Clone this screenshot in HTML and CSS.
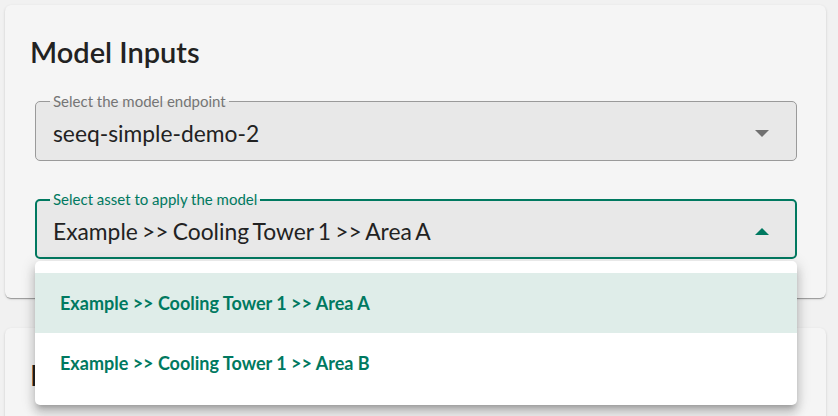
FILE: index.html
```html
<!DOCTYPE html>
<html lang="en">
<head>
<meta charset="utf-8">
<title>Model Inputs</title>
<link rel="stylesheet" href="styles.css">
</head>
<body>
  <section class="card card-inputs">
    <h2 class="card-title">Model Inputs</h2>
    <div class="field">
      <span class="field-label">Select the model endpoint</span>
      <span class="field-value">seeq-simple-demo-2</span>
      <span class="arrow arrow-down"></span>
    </div>
    <div class="select-wrap">
      <div class="field field-focused">
        <span class="field-label">Select asset to apply the model</span>
        <span class="field-value">Example &gt;&gt; Cooling Tower 1 &gt;&gt; Area A</span>
        <span class="arrow arrow-up"></span>
      </div>
      <ul class="menu">
        <li class="menu-item selected">Example &gt;&gt; Cooling Tower 1 &gt;&gt; Area A</li>
        <li class="menu-item">Example &gt;&gt; Cooling Tower 1 &gt;&gt; Area B</li>
      </ul>
    </div>
  </section>
  <section class="card card-outputs">
    <h2 class="card-title">Model Outputs</h2>
  </section>
</body>
</html>
```

FILE: styles.css
```css
* { box-sizing: border-box; }
html, body { height: 100%; }
body {
  margin: 0;
  padding: 5px 12px 0 5px;
  background: #f1f1f1;
  font-family: Lato, "Noto Sans", sans-serif;
  color: #222;
  overflow: hidden;
}
.card {
  background: #f5f5f5;
  border-radius: 6px;
  box-shadow: 0 2px 1px -1px rgba(0,0,0,0.2), 0 1px 1px 0 rgba(0,0,0,0.14), 0 1px 3px 0 rgba(0,0,0,0.12);
  padding: 30px 29px 39px 30px;
}
.card-outputs {
  margin-top: 30px;
  height: 200px;
}
.card-title {
  margin: 0 0 32px -5px;
  font-size: 29px;
  line-height: 34px;
  font-weight: 600;
  color: #222;
}
.field {
  position: relative;
  height: 60px;
  border: 1px solid #9a9a9a;
  border-radius: 5px;
  background: #e8e8e8;
  display: flex;
  align-items: center;
  padding: 4px 17px 0 17px;
}
.field-label {
  position: absolute;
  top: -10px;
  left: 14px;
  padding: 0 3px;
  font-size: 15px;
  line-height: 18px;
  color: #757575;
  background: linear-gradient(to bottom, #f5f5f5 50%, #e8e8e8 50%);
}
.field-value {
  flex: 1;
  font-size: 22.8px;
  line-height: 28px;
  word-spacing: -1.6px;
  color: #222;
  white-space: nowrap;
}
.arrow {
  width: 0;
  height: 0;
  border-left: 7px solid transparent;
  border-right: 7px solid transparent;
  margin-right: 10px;
}
.arrow-down { border-top: 7px solid #707070; }
.arrow-up { border-bottom: 7px solid #007960; }
.select-wrap {
  position: relative;
  margin-top: 38px;
}
.field-focused {
  border: 2px solid #007960;
  padding-left: 16px;
  padding-right: 16px;
}
.field-focused .field-label {
  top: -11px;
  left: 13px;
  color: #007960;
}
.menu {
  position: absolute;
  z-index: 2;
  left: 0;
  right: 0;
  top: calc(100% + 2px);
  margin: 0;
  padding: 12px 0;
  list-style: none;
  background: #fff;
  border-radius: 5px;
  box-shadow: 0 5px 5px -3px rgba(0,0,0,0.2), 0 8px 10px 1px rgba(0,0,0,0.14), 0 3px 14px 2px rgba(0,0,0,0.12);
}
.menu-item {
  height: 60px;
  display: flex;
  align-items: center;
  padding: 0 25px;
  font-size: 18px;
  font-weight: 700;
  color: #007960;
}
.menu-item.selected { background: #dfede9; }
```
